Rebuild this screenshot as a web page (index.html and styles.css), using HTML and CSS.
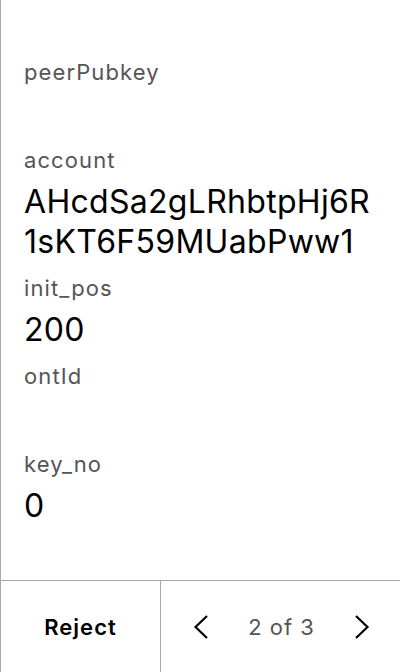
FILE: index.html
```html
<!DOCTYPE html>
<html>
<head>
<meta charset="utf-8">
<link rel="stylesheet" href="styles.css">
</head>
<body>
<div class="screen">
  <div class="content">
    <div class="field">
      <div class="label">peerPubkey</div>
      <div class="value"></div>
    </div>
    <div class="field">
      <div class="label">account</div>
      <div class="value">AHcdSa2gLRhbtpHj6R1sKT6F59MUabPww1</div>
    </div>
    <div class="field">
      <div class="label">init_pos</div>
      <div class="value">200</div>
    </div>
    <div class="field">
      <div class="label">ontId</div>
      <div class="value"></div>
    </div>
    <div class="field">
      <div class="label">key_no</div>
      <div class="value">0</div>
    </div>
  </div>
  <div class="footer">
    <div class="reject">Reject</div>
    <div class="pager">
      <svg class="chev" width="16" height="24" viewBox="0 0 16 24"><path d="M14 1 L2.5 12 L14 23" fill="none" stroke="#000" stroke-width="2.2"/></svg>
      <span class="count">2 of 3</span>
      <svg class="chev" width="16" height="24" viewBox="0 0 16 24"><path d="M2 1 L13.5 12 L2 23" fill="none" stroke="#000" stroke-width="2.2"/></svg>
    </div>
  </div>
</div>
</body>
</html>
```
FILE: styles.css
```css
html, body {
  margin: 0;
  padding: 0;
  background: #fff;
}
body {
  font-family: Inter, "Liberation Sans", sans-serif;
  color: #000;
}
.screen {
  width: 399px;
  height: 672px;
  border-left: 1px solid #a8a8a8;
  display: flex;
  flex-direction: column;
}
.content {
  flex: 1;
  padding: 60px 24px 0 23px;
  display: flex;
  flex-direction: column;
}
.field {
  display: flex;
  flex-direction: column;
  padding-bottom: 14px;
}
.label {
  font-size: 22px;
  line-height: 24px;
  letter-spacing: 1.1px;
  color: #555;
  margin-bottom: 10px;
}
.value {
  font-size: 32px;
  line-height: 40px;
  min-height: 40px;
  letter-spacing: 0.3px;
  word-break: break-all;
}
.footer {
  height: 91px;
  border-top: 1px solid #a8a8a8;
  display: flex;
}
.reject {
  width: 159px;
  border-right: 1px solid #a8a8a8;
  display: flex;
  align-items: center;
  justify-content: center;
  font-size: 22px;
  font-weight: 600;
  letter-spacing: 1px;
}
.pager {
  flex: 1;
  display: flex;
  align-items: center;
  justify-content: space-between;
  padding: 0 30px 0 32px;
}
.count {
  font-size: 22px;
  letter-spacing: 1px;
  color: #555;
}
```
